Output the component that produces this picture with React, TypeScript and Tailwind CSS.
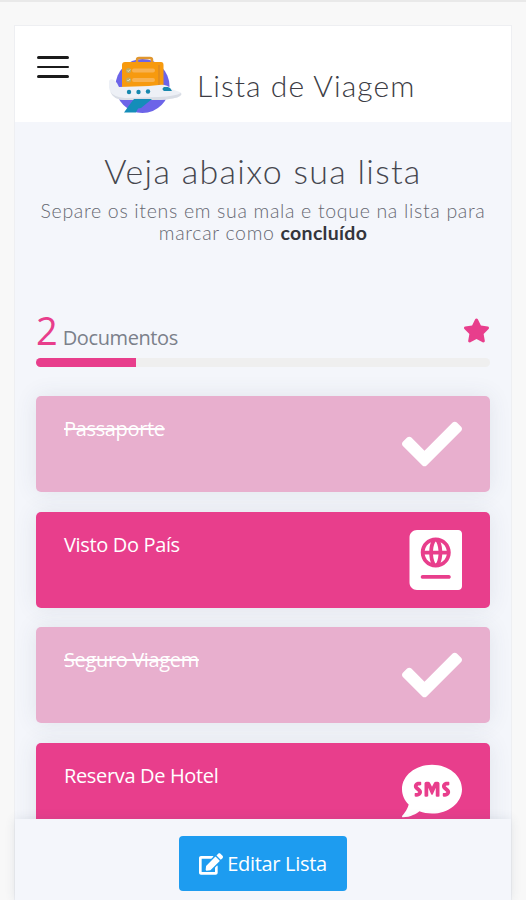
import { FaCheck, FaEdit, FaPassport, FaSms, FaStar } from 'react-icons/fa';
import type { IconType } from 'react-icons';

type Item = {
  name: string;
  done: boolean;
  icon: IconType;
};

const items: Item[] = [
  { name: 'Passaporte', done: true, icon: FaCheck },
  { name: 'Visto Do País', done: false, icon: FaPassport },
  { name: 'Seguro Viagem', done: true, icon: FaCheck },
  { name: 'Reserva De Hotel', done: false, icon: FaSms },
];

function Logo() {
  return (
    <svg viewBox="0 0 74 58" className="h-[58px] w-[74px]">
      <circle cx="33.5" cy="30" r="27" fill="#6c64e8" />
      <path d="M28 6V4q0-2 2-2h11q2 0 2 2v2" fill="none" stroke="#e0962f" strokeWidth="2.5" />
      <path d="M16 6h36q2.500 0 2.500 3v26H13V9q0-3 3-3z" fill="#f79a0e" />
      <path d="M50 9v24" stroke="#dd8a22" strokeWidth="1.500" />
      <circle cx="19.500" cy="14.500" r="2.600" fill="#c2a95f" />
      <circle cx="19.500" cy="24" r="2.600" fill="#c2a95f" />
      <path d="m18.300 14.500 1 1 1.800-2M18.300 24l1 1 1.800-2" fill="none" stroke="#e9e6c9" strokeWidth="0.900" />
      <path d="M25 14.500h19M25 24h19" stroke="#f8b251" strokeWidth="4" strokeLinecap="round" />
      <path d="M0 25q1-3 5-1 4 3 5 7l30-1 10-1q8-1 12 4l9 3q3 2 0 4-4 3-22 4H16Q5 44 2 37-1 32 0 25z" fill="#edf0f6" />
      <path d="M1 35q3 6 15 7l34-1q17-1 22-4 1 2-1 3-4 3-22 4H16Q4 44 1 35z" fill="#d9dde5" />
      <circle cx="20" cy="36" r="2.200" fill="#1788ae" />
      <circle cx="29.500" cy="36" r="2.200" fill="#1788ae" />
      <circle cx="39" cy="35.500" r="2.200" fill="#1788ae" />
      <path d="M55 31h4q3 1 4 4h-8q-3-2 0-4z" fill="#1788ae" />
      <path d="M25 43h18l-11 9-3 .5-2 4H15l5-7z" fill="#158db9" />
    </svg>
  );
}

function Header() {
  return (
    <header className="flex h-24 shrink-0 items-start bg-white pl-[22px]">
      <button aria-label="Menu" className="mt-[30px] flex w-8 flex-col gap-[7px]">
        <span className="h-[2.5px] w-full rounded-sm bg-[#1b1b1b]" />
        <span className="h-[2.5px] w-full rounded-sm bg-[#1b1b1b]" />
        <span className="h-[2.5px] w-full rounded-sm bg-[#1b1b1b]" />
      </button>
      <div className="mt-[30px] ml-[40px]">
        <Logo />
      </div>
      <h1 className="mt-[41px] ml-[14px] text-[30px] leading-9 font-light tracking-[1.05px] whitespace-nowrap text-[#3c3c44]">
        Lista de Viagem
      </h1>
    </header>
  );
}

function ItemCard({ item }: { item: Item }) {
  const Icon = item.icon;

  return (
    <li
      className={`flex h-24 shrink-0 items-start justify-between rounded-[5px] pr-[28px] pl-[28px] shadow-[0_0_22px_rgba(60,70,100,0.1)] ${
        item.done ? 'bg-[#e8afce]' : 'bg-[#e83e8c]'
      }`}
    >
      <span
        className={`mt-[19px] text-[20px] leading-7 tracking-[-0.35px] text-white ${
          item.done ? 'line-through decoration-2' : ''
        }`}
      >
        {item.name}
      </span>
      <Icon preserveAspectRatio="xMaxYMid" className="mt-[18px] h-[60px] w-[60px] text-white" />
    </li>
  );
}

export default function App() {
  return (
    <div className="h-[900px] overflow-hidden border-t-2 border-[#e9e9e9] bg-[#f8f8f8] px-[14px] pt-[23px] font-['Open_Sans',sans-serif]">
      <div className="flex h-full w-[498px] flex-col border border-b-0 border-[#eeeff2] bg-[#f4f6fb]">
        <div className="font-['Lato',sans-serif]">
          <Header />
          <section className="pt-[29px] text-center">
            <h2 className="text-[34px] leading-10 font-light tracking-[1.3px] text-[#45464e]">Veja abaixo sua lista</h2>
            <p className="mt-[9px] text-[19.5px] leading-[22px] font-light tracking-[0.68px] text-[#666872]">
              Separe os itens em sua mala e toque na lista para
              <br />
              marcar como <strong className="font-bold tracking-[0.3px] text-[#34353c]">concluído</strong>
            </p>
          </section>
        </div>

        <main className="flex min-h-0 flex-1 flex-col overflow-hidden px-[21px] pt-[64px]">
          <div className="flex h-[50px] shrink-0 items-start justify-between">
            <div className="flex items-baseline text-[20px] text-[#7b808a]">
              <span className="mr-[5px] text-[38px] leading-[44px] text-[#e83e8c]">2</span>
              <span className="tracking-[-0.4px]">Documentos</span>
            </div>
            <FaStar className="mt-[9px] h-[27px] w-[27px] text-[#e83e8c]" />
          </div>
          <div className="h-[9px] shrink-0 overflow-hidden rounded-full bg-[#efefef]">
            <div className="h-full w-[22%] bg-[#e83e8c]" />
          </div>
          <ul className="mt-[29px] flex flex-col gap-[19.5px]">
            {items.map((item) => (
              <ItemCard key={item.name} item={item} />
            ))}
          </ul>
        </main>

        <footer className="z-10 flex h-[81px] shrink-0 justify-center bg-[#f4f6fb] pt-[17px] shadow-[0_0_10px_rgba(60,70,100,0.12)]">
          <button className="flex h-[55px] w-[168px] items-center justify-center gap-1 rounded-[4px] bg-[#1d9cf0] text-[20px] tracking-[-0.3px] text-white">
            <FaEdit className="h-[22px] w-[24px]" />
            Editar Lista
          </button>
        </footer>
      </div>
    </div>
  );
}
